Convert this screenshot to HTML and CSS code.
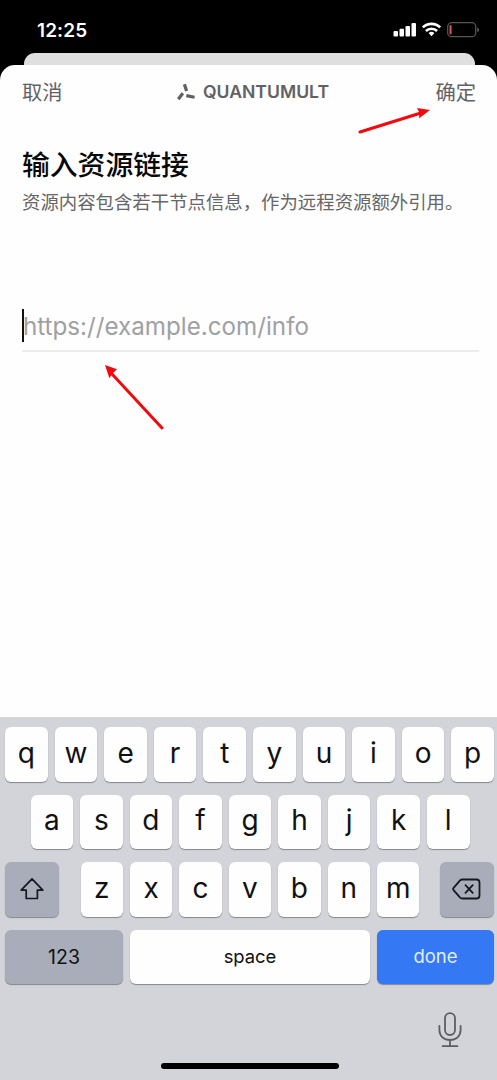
FILE: index.html
```html
<!DOCTYPE html>
<html lang="zh-CN">
<head>
<meta charset="utf-8">
<title>Quantumult</title>
<link rel="stylesheet" href="styles.css">
</head>
<body>
<div class="phone">
  <header class="status">
    <span class="time">12:25</span>
    <svg class="indicators" width="87" height="18" viewBox="0 0 87 18">
      <g fill="#fff">
        <rect x="0.5" y="11" width="4.5" height="5.5" rx="1"/>
        <rect x="6.5" y="8.8" width="4.5" height="7.7" rx="1"/>
        <rect x="12.5" y="6" width="4.5" height="10.5" rx="1"/>
        <rect x="18.5" y="3" width="4.5" height="13.5" rx="1"/>
        <path d="M35.6 13a4.5 4.5 0 0 1 5.8 0L38.5 16.3z"/>
      </g>
      <g fill="none" stroke="#fff" stroke-width="2.6">
        <path d="M29.8 7.4a12.5 12.5 0 0 1 17.4 0"/>
        <path d="M32.9 11a8 8 0 0 1 11.2 0"/>
      </g>
      <rect x="54.7" y="2.7" width="28" height="14" rx="4" fill="none" stroke="#555" stroke-width="1.3"/>
      <rect x="56.5" y="5" width="2.1" height="9.5" rx="1" fill="#cf5360"/>
      <path d="M84.3 7.5c2.2.8 2.2 4 0 4.6z" fill="#666"/>
    </svg>
  </header>
  <div class="back-sheet"></div>
  <main class="sheet">
    <nav class="nav">
      <span class="action">取消</span>
      <span class="brand">
        <svg width="20" height="18" viewBox="0 0 20 18" fill="none" stroke="#606063" stroke-width="3.2">
          <path d="M7.400 1.200 9.600 8"/>
          <path d="M1.300 16.200 5.800 10.200"/>
          <path d="M9.300 12.600 17.600 14.200"/>
        </svg>
        <span class="brand-name">QUANTUMULT</span>
      </span>
      <span class="action">确定</span>
    </nav>
    <h1 class="title">输入资源链接</h1>
    <p class="subtitle">资源内容包含若干节点信息，作为远程资源额外引用。</p>
    <div class="field"><span class="caret"></span><span class="placeholder">https://example.com/info</span></div>
  </main>
  <section class="keyboard">
    <div class="row">
      <span class="key">q</span><span class="key">w</span><span class="key">e</span><span class="key">r</span><span class="key">t</span><span class="key">y</span><span class="key">u</span><span class="key">i</span><span class="key">o</span><span class="key">p</span>
    </div>
    <div class="row middle">
      <span class="key">a</span><span class="key">s</span><span class="key">d</span><span class="key">f</span><span class="key">g</span><span class="key">h</span><span class="key">j</span><span class="key">k</span><span class="key">l</span>
    </div>
    <div class="row split">
      <span class="key dark modifier">
        <svg width="26" height="24" viewBox="0 0 26 24" fill="none" stroke="#15181e" stroke-width="1.7" stroke-linejoin="round"><path d="M13 1.8 2.2 13.2h5v8.3h11.2v-8.3h5.400z"/></svg>
      </span>
      <div class="letters">
        <span class="key">z</span><span class="key">x</span><span class="key">c</span><span class="key">v</span><span class="key">b</span><span class="key">n</span><span class="key">m</span>
      </div>
      <span class="key dark modifier">
        <svg width="30" height="24" viewBox="0 0 30 24" fill="none" stroke="#15181e" stroke-width="1.8" stroke-linejoin="round" stroke-linecap="round"><path d="M10.2 2.5h14.3a3 3 0 0 1 3 3v13a3 3 0 0 1-3 3H10.2a3 3 0 0 1-2.1-.9L1.8 13.4a2 2 0 0 1 0-2.8l6.3-7.2a3 3 0 0 1 2.1-.9z"/><path d="m13.5 8.2 7.2 7.6m0-7.6-7.2 7.6"/></svg>
      </span>
    </div>
    <div class="row">
      <span class="key dark wide">123</span><span class="key space">space</span><span class="key wide done">done</span>
    </div>
    <div class="dock">
      <svg width="24" height="36" viewBox="0 0 24 36" fill="none" stroke="#5b5d64" stroke-width="1.8" stroke-linecap="round"><rect x="7" y="1.2" width="10" height="21.8" rx="5"/><path d="M1.4 14v4c0 6.2 4.6 10 10.6 10s10.6-3.8 10.6-10v-4M12 28v6M4.6 34.2h14.8"/></svg>
    </div>
    <div class="home"></div>
  </section>
  <svg class="arrows" width="497" height="1080" viewBox="0 0 497 1080" fill="#f00a0d" stroke="#f00a0d">
    <path d="M360 132 420 113.3M162 428 112 374" stroke-width="3" stroke-linecap="round"/>
    <path d="m430 110-13-2 2.5 5-.5 5.500zM105 365l12 4.200-4.700 4.500-2.900 4.600z" stroke="none"/>
  </svg>
</div>
</body>
</html>
```
FILE: styles.css
```css
* { box-sizing: border-box; }
body { margin: 0; font-family: Inter, "Noto Sans CJK SC", sans-serif; }
.phone { position: relative; display: flex; flex-direction: column; width: 497px; height: 1080px; overflow: hidden; background: #000; }
.status { display: flex; justify-content: space-between; height: 53px; padding: 20px 17px 0 37px; }
.time { color: #fff; font-size: 19px; line-height: 21px; font-weight: 600; letter-spacing: 0.1px; }
.indicators { display: block; }
.back-sheet { height: 30px; margin: 0 22px 0 24px; border-radius: 11px 11px 0 0; background: #dfdfe0; }
.sheet { position: relative; flex: 1; margin-top: -18px; padding: 11px 21px 0 22px; border-radius: 15px 15px 0 0; background: #fefefe; }
.nav { display: flex; align-items: center; justify-content: space-between; height: 32px; color: #626265; }
.action { padding-top: 2px; font-size: 20.3px; line-height: 30px; }
.brand { display: flex; align-items: center; gap: 6px; padding-left: 8px; }
.brand-name { font-size: 17.6px; line-height: 24px; font-weight: 600; }
.title { margin: 37px 0 0; font-size: 27.8px; line-height: 40px; font-weight: 500; color: #080808; }
.subtitle { margin: 3px 0 0; font-size: 18.4px; line-height: 28px; font-weight: 400; color: #666; white-space: nowrap; }
.field { display: flex; align-items: center; height: 43px; margin: 93px -3px 0 0; padding-bottom: 8px; border-bottom: 2px solid #ececee; }
.caret { width: 2px; height: 33px; background: #111; }
.placeholder { margin-left: -1px; padding-top: 2px; font-size: 24.2px; line-height: 32px; color: #a0a0a2; }
.keyboard { display: flex; flex-direction: column; gap: 13px; height: 363px; padding: 10px 3px 0 5px; background: #d2d4d9; }
.row { display: flex; gap: 6.9px; height: 54.5px; }
.middle { padding: 0 24.5px 0 25.5px; }
.split { justify-content: space-between; }
.letters { display: flex; gap: 6.9px; width: 339px; margin-left: 1px; }
.key { display: flex; flex: 1; align-items: center; justify-content: center; padding-bottom: 3px; border-radius: 6px; background: #fefefe; box-shadow: 0 1px 1px #85878c; color: #111; font-size: 28px; font-weight: 400; line-height: 36px; }
.dark { background: #a9adb9; }
.modifier { flex: 0 0 54px; padding: 0; }
.wide { flex: 0 0 118px; padding: 0; font-size: 19.5px; font-weight: 400; }
.space { padding-bottom: 2px; font-size: 18.4px; font-weight: 400; }
.done { flex-basis: 117px; padding-bottom: 2px; font-size: 18.5px; background: #3478f3; color: #e2ecff; }
.dock { display: flex; justify-content: flex-end; height: 37px; margin-top: 15px; padding-right: 32px; }
.home { width: 178px; height: 6px; margin: 1px 0 0 156px; border-radius: 3px; background: #000; }
.arrows { position: absolute; inset: 0; pointer-events: none; }
```
